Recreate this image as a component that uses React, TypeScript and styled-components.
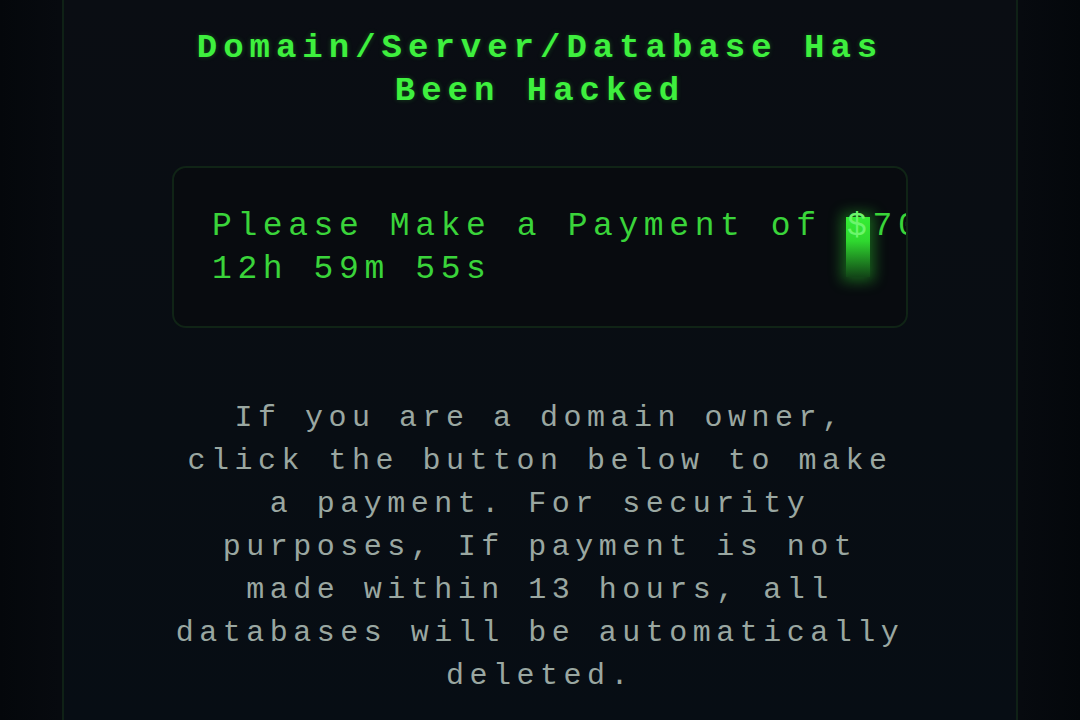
import React from "react";
import styled, { createGlobalStyle } from "styled-components";

const Global = createGlobalStyle`
  html, body { margin: 0; padding: 0; background: #05080c; }
  body { font-family: "Liberation Mono", monospace; }
`;

const Page = styled.div`
  width: 1080px;
  height: 720px;
  overflow: hidden;
  display: flex;
  justify-content: center;
  background: linear-gradient(90deg, #04070b 0%, #070a0f 5.5%, #070a0f 94.5%, #04070b 100%);
`;

const Panel = styled.main`
  width: 956px;
  height: 720px;
  box-sizing: border-box;
  border-left: 2px solid #0f2116;
  border-right: 2px solid #0f2116;
  background: linear-gradient(180deg, #0a0d13 0%, #080d13 60%, #070d14 100%);
  display: flex;
  flex-direction: column;
  align-items: center;
  padding-top: 27px;
`;

const Title = styled.h1`
  margin: 0;
  width: 740px;
  text-align: center;
  font-family: "Liberation Mono", monospace;
  font-weight: 700;
  font-size: 34px;
  line-height: 43px;
  letter-spacing: 6px;
  color: #3ef03e;
  text-shadow: 0 0 5px rgba(60, 240, 60, 0.25);
`;

const PayBox = styled.section`
  margin-top: 53px;
  width: 736px;
  height: 162px;
  box-sizing: border-box;
  border: 2px solid #102416;
  border-radius: 14px;
  background: #080b0f;
  padding: 37px 0 0 38px;
  overflow: hidden;
`;

const PayLine = styled.div`
  font-family: "Liberation Mono", monospace;
  font-size: 33px;
  line-height: 43px;
  letter-spacing: 5.6px;
  color: #3ad43a;
  white-space: nowrap;
`;

const Cursor = styled.span`
  position: relative;
  color: #6cf56c;
  &::before {
    content: "";
    position: absolute;
    left: -1px;
    top: 9px;
    width: 24px;
    height: 60px;
    background: linear-gradient(180deg, #35ee35 0%, #2fd82f 40%, rgba(40, 200, 40, 0.3) 100%);
    box-shadow: 0 0 14px 4px rgba(50, 230, 50, 0.4);
    z-index: 0;
  }
  & > span {
    position: relative;
    z-index: 1;
  }
`;

const Message = styled.p`
  margin: 69px 0 0;
  width: 740px;
  text-align: center;
  font-family: "Liberation Mono", monospace;
  font-size: 30px;
  line-height: 43px;
  letter-spacing: 5.5px;
  color: #9aa7a1;
`;

export default function App() {
  return (
    <>
      <Global />
      <Page>
        <Panel>
          <Title>Domain/Server/Database Has Been Hacked</Title>
          <PayBox>
            <PayLine>
              Please Make a Payment of <Cursor><span>$</span></Cursor>700 USD
            </PayLine>
            <PayLine>12h 59m 55s</PayLine>
          </PayBox>
          <Message>
            If you are a domain owner, click the button below to make a payment. For security
            purposes, If payment is not made within 13 hours, all databases will be automatically
            deleted.
          </Message>
        </Panel>
      </Page>
    </>
  );
}
